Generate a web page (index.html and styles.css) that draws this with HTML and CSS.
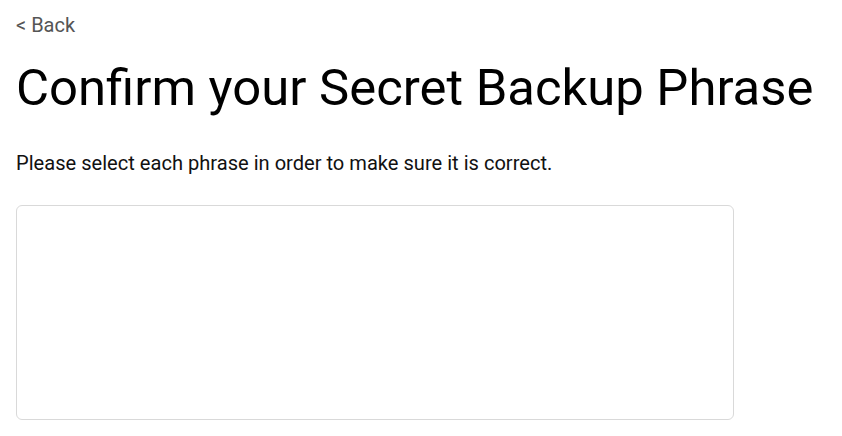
FILE: index.html
```html
<!DOCTYPE html>
<html>
<head>
<meta charset="utf-8">
<link rel="stylesheet" href="styles.css">
</head>
<body>
<div class="page">
  <a class="back">&lt; Back</a>
  <h1 class="title">Confirm your Secret Backup Phrase</h1>
  <p class="desc">Please select each phrase in order to make sure it is correct.</p>
  <div class="phrase-box"></div>
</div>
</body>
</html>
```
FILE: styles.css
```css
html, body {
  margin: 0;
  padding: 0;
  background: #fff;
}
.page {
  font-family: Roboto, "Liberation Sans", sans-serif;
  padding: 12px 16px 0 16px;
  display: flex;
  flex-direction: column;
  align-items: flex-start;
}
.back {
  font-size: 20px;
  line-height: 26px;
  color: #555;
  cursor: pointer;
}
.title {
  margin: 20px 0 0 0;
  font-size: 50.8px;
  font-weight: 400;
  line-height: 60px;
  color: #000;
}
.desc {
  margin: 33px 0 0 0;
  font-size: 20.1px;
  line-height: 24px;
  color: #111;
}
.phrase-box {
  margin-top: 30px;
  width: 716px;
  height: 213px;
  border: 1px solid #d9d9d9;
  border-radius: 6px;
}
```
